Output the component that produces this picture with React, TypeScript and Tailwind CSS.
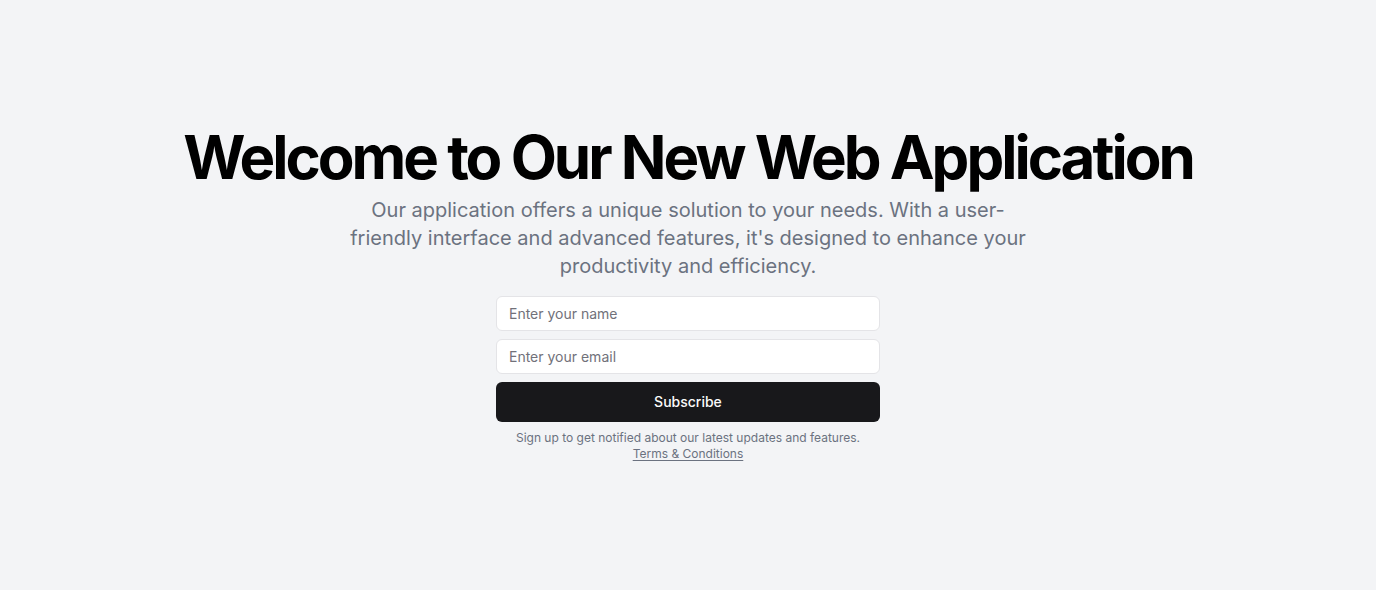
import React from "react";

export default function App() {
  return (
    <div
      className="min-h-screen w-full bg-[#f3f4f6] flex items-center justify-center"
      style={{ fontFamily: "Inter, 'Noto Sans', sans-serif" }}
    >
      <div className="flex flex-col items-center text-center pb-[1px]">
        <h1 className="text-[60px] leading-none font-bold tracking-tighter text-black">
          Welcome to Our New Web Application
        </h1>
        <p className="mt-[9px] max-w-[700px] text-xl leading-7 text-[#6b7280]">
          Our application offers a unique solution to your needs. With a user-friendly interface and advanced features, it's designed to enhance your productivity and efficiency.
        </p>
        <form className="mt-4 w-full max-w-sm flex flex-col gap-2" onSubmit={(e) => e.preventDefault()}>
          <input
            className="h-[35px] w-full rounded-md border border-[#e4e4e7] bg-white px-3 text-sm text-black placeholder:text-[#71717a] outline-none"
            placeholder="Enter your name"
            type="text"
          />
          <input
            className="h-[35px] w-full rounded-md border border-[#e4e4e7] bg-white px-3 text-sm text-black placeholder:text-[#71717a] outline-none"
            placeholder="Enter your email"
            type="email"
          />
          <button
            type="submit"
            className="h-10 w-full rounded-md bg-[#18181b] text-sm font-medium text-[#fafafa]"
          >
            Subscribe
          </button>
          <p className="text-xs leading-4 text-[#6b7280]">
            Sign up to get notified about our latest updates and features.{" "}
            <br />
            <a href="#" className="underline underline-offset-2">
              Terms &amp; Conditions
            </a>
          </p>
        </form>
      </div>
    </div>
  );
}
